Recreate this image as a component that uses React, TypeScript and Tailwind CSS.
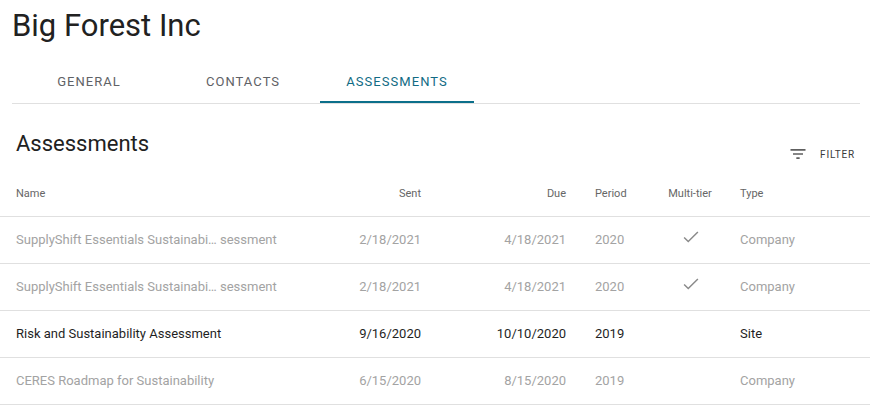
import React, { useState } from 'react'

type Row = {
  name: string
  sent: string
  due: string
  period: string
  multiTier: boolean
  type: string
  active: boolean
}

const rows: Row[] = [
  { name: 'SupplyShift Essentials Sustainabi… sessment', sent: '2/18/2021', due: '4/18/2021', period: '2020', multiTier: true, type: 'Company', active: false },
  { name: 'SupplyShift Essentials Sustainabi… sessment', sent: '2/18/2021', due: '4/18/2021', period: '2020', multiTier: true, type: 'Company', active: false },
  { name: 'Risk and Sustainability Assessment', sent: '9/16/2020', due: '10/10/2020', period: '2019', multiTier: false, type: 'Site', active: true },
  { name: 'CERES Roadmap for Sustainability', sent: '6/15/2020', due: '8/15/2020', period: '2019', multiTier: false, type: 'Company', active: false },
]

const tabs = ['General', 'Contacts', 'Assessments']

const cols = 'grid grid-cols-[341px_80px_145px_86px_76px_1fr] items-center'

const FilterIcon = () => (
  <svg viewBox="0 0 24 24" className="w-[20px] h-[20px]" fill="#5f5f5f">
    <path d="M10 18h4v-2h-4v2zM3 6v2h18V6H3zm3 7h12v-2H6v2z" />
  </svg>
)

const CheckIcon = () => (
  <svg viewBox="0 0 24 24" className="w-[22px] h-[22px]" fill="none" stroke="#8a8a8a" strokeWidth="1.6">
    <polyline points="4.5,12.5 9,17 19.5,6.5" />
  </svg>
)

export default function App() {
  const [tab, setTab] = useState(2)

  return (
    <div className="w-[870px] h-[409px] bg-white overflow-hidden font-['Roboto',sans-serif]">
      <div className="pl-[12px] pr-[10px]">
        <h1 className="pt-[7px] h-[55px] text-[31px] leading-[38px] text-[#212121] font-normal">
          Big Forest Inc
        </h1>
        <div className="flex border-b border-[#e0e0e0]">
          {tabs.map((t, i) => (
            <button
              key={t}
              onClick={() => setTab(i)}
              className={
                'relative w-[154px] h-[48px] pt-[5px] uppercase text-[13px] font-normal tracking-[1.05px] ' +
                (i === tab ? 'text-[#116b84]' : 'text-[#5f6266]')
              }
            >
              {t}
              {i === tab && (
                <span className="absolute left-0 right-0 bottom-0 h-[2px] bg-[#0b6f8a]" />
              )}
            </button>
          ))}
        </div>
      </div>

      <div className="flex items-start justify-between pl-[16px] pr-[15px] pt-[25px]">
        <h2 className="text-[22px] leading-[30px] text-[#212121] font-normal">Assessments</h2>
        <button className="flex items-center gap-[12px] mt-[15px] text-[10px] font-normal tracking-[0.8px] text-[#3a3a3a]">
          <FilterIcon />
          FILTER
        </button>
      </div>

      <div className={cols + ' h-[52px] pt-[8px] text-[11px] text-[#666] border-b border-[#e0e0e0] mt-[1px]'}>
        <div className="pl-[16px]">Name</div>
        <div className="text-right">Sent</div>
        <div className="text-right">Due</div>
        <div className="pl-[29px]">Period</div>
        <div className="text-center">Multi-tier</div>
        <div className="pl-[12px]">Type</div>
      </div>

      {rows.map((r, i) => (
        <div
          key={i}
          className={
            cols +
            ' h-[47px] text-[13px] border-b border-[#e0e0e0] ' +
            (r.active ? 'text-[#1f1f1f]' : 'text-[#a3a3a3]')
          }
        >
          <div className="pl-[16px] whitespace-nowrap">{r.name}</div>
          <div className="text-right">{r.sent}</div>
          <div className="text-right">{r.due}</div>
          <div className="pl-[29px]">{r.period}</div>
          <div className="flex justify-center -mt-[6px] pl-[1px]">{r.multiTier && <CheckIcon />}</div>
          <div className="pl-[12px]">{r.type}</div>
        </div>
      ))}
    </div>
  )
}
